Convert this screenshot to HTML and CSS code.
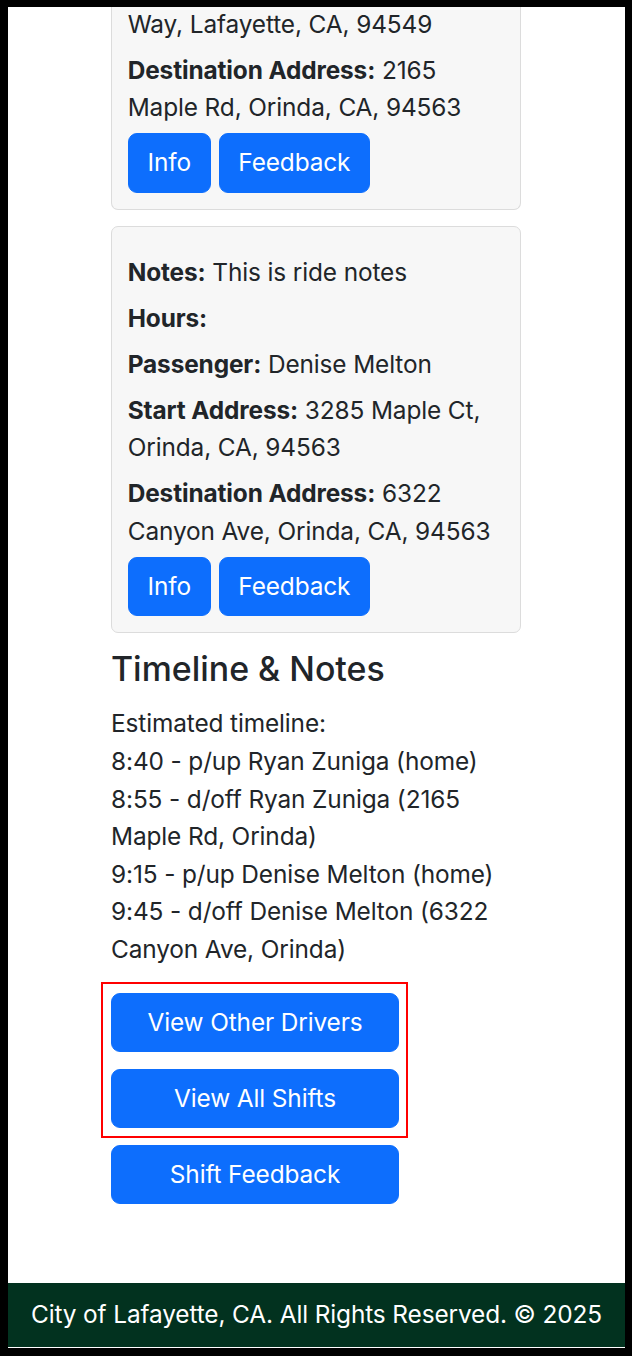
FILE: index.html
```html
<!DOCTYPE html>
<html lang="en">
<head>
<meta charset="utf-8">
<title>Shift Details</title>
<link rel="stylesheet" href="styles.css">
</head>
<body>
  <main class="content">
    <section class="card card-cut">
      <p class="field">Way, Lafayette, CA, 94549</p>
      <p class="field"><strong>Destination Address:</strong> 2165 Maple Rd, Orinda, CA, 94563</p>
      <div class="actions">
        <button class="btn">Info</button>
        <button class="btn">Feedback</button>
      </div>
    </section>

    <section class="card card-full">
      <p class="field"><strong>Notes:</strong> This is ride notes</p>
      <p class="field"><strong>Hours:</strong></p>
      <p class="field"><strong>Passenger:</strong> Denise Melton</p>
      <p class="field"><strong>Start Address:</strong> 3285 Maple Ct, Orinda, CA, 94563</p>
      <p class="field"><strong>Destination Address:</strong> 6322 Canyon Ave, Orinda, CA, 94563</p>
      <div class="actions">
        <button class="btn">Info</button>
        <button class="btn">Feedback</button>
      </div>
    </section>

    <h4 class="section-title">Timeline &amp; Notes</h4>
    <p class="timeline">Estimated timeline:<br>8:40 - p/up Ryan Zuniga (home)<br>8:55 - d/off Ryan Zuniga (2165 Maple Rd, Orinda)<br>9:15 - p/up Denise Melton (home)<br>9:45 - d/off Denise Melton (6322 Canyon Ave, Orinda)</p>

    <div class="shift-actions">
      <div class="highlight">
        <button class="btn btn-wide">View Other Drivers</button>
        <button class="btn btn-wide">View All Shifts</button>
      </div>
      <button class="btn btn-wide">Shift Feedback</button>
    </div>
  </main>

  <footer class="footer">City of Lafayette, CA. All Rights Reserved. © 2025</footer>
</body>
</html>
```

FILE: styles.css
```css
html {
  background: #000;
  margin: 0;
  padding: 0;
}

body {
  margin: 7px 7px 8px 8px;
  height: 1341px;
  box-sizing: border-box;
  background: #fff;
  overflow: hidden;
  display: flex;
  flex-direction: column;
  font-family: Inter, "Noto Sans", "Liberation Sans", sans-serif;
  font-size: 24.4px;
  letter-spacing: -0.12px;
  line-height: 37.6px;
  color: #212529;
}

.content {
  margin: -1px 0 0 103px;
  width: 410px;
  display: flex;
  flex-direction: column;
}

.card {
  background: #f7f7f7;
  border: 1.5px solid #dcdcdc;
  border-radius: 7px;
  padding: 15.7px;
  margin-bottom: 16.5px;
}

.card-cut {
  border-top: none;
  border-top-left-radius: 0;
  border-top-right-radius: 0;
  padding-top: 0;
}

.card-full {
  padding-top: 27px;
}

.field {
  margin: 0 0 8.2px;
}

.field strong {
  font-weight: 700;
}

.actions {
  display: flex;
  gap: 7.85px;
  margin-top: -1.7px;
}

.btn {
  box-sizing: border-box;
  height: 59.6px;
  display: flex;
  align-items: center;
  justify-content: center;
  font-family: inherit;
  font-size: 24.4px;
  letter-spacing: -0.12px;
  line-height: 37.6px;
  color: #fff;
  background: #0d6efd;
  border: 1.5px solid #0d6efd;
  border-radius: 9px;
  padding: 0 18.8px;
  margin: 0;
  cursor: pointer;
}

.section-title {
  margin: 0 0 15.2px;
  font-size: 33.9px;
  letter-spacing: 0;
  line-height: 40.7px;
  font-weight: 500;
}

.timeline {
  margin: 0 0 24.3px;
}

.shift-actions {
  display: flex;
  flex-direction: column;
  gap: 16.4px;
  width: 288px;
}

.highlight {
  position: relative;
  display: flex;
  flex-direction: column;
  gap: 16.4px;
}

.highlight::after {
  content: "";
  position: absolute;
  top: -10.7px;
  left: -10.5px;
  right: -8.5px;
  bottom: -9.3px;
  border: 2px solid #f00;
  pointer-events: none;
}

.btn-wide {
  width: 288px;
}

.footer {
  margin-top: auto;
  margin-bottom: 1px;
  height: 64px;
  display: flex;
  align-items: center;
  justify-content: center;
  background: #02321f;
  color: #fff;
  font-size: 24.4px;
}
```
